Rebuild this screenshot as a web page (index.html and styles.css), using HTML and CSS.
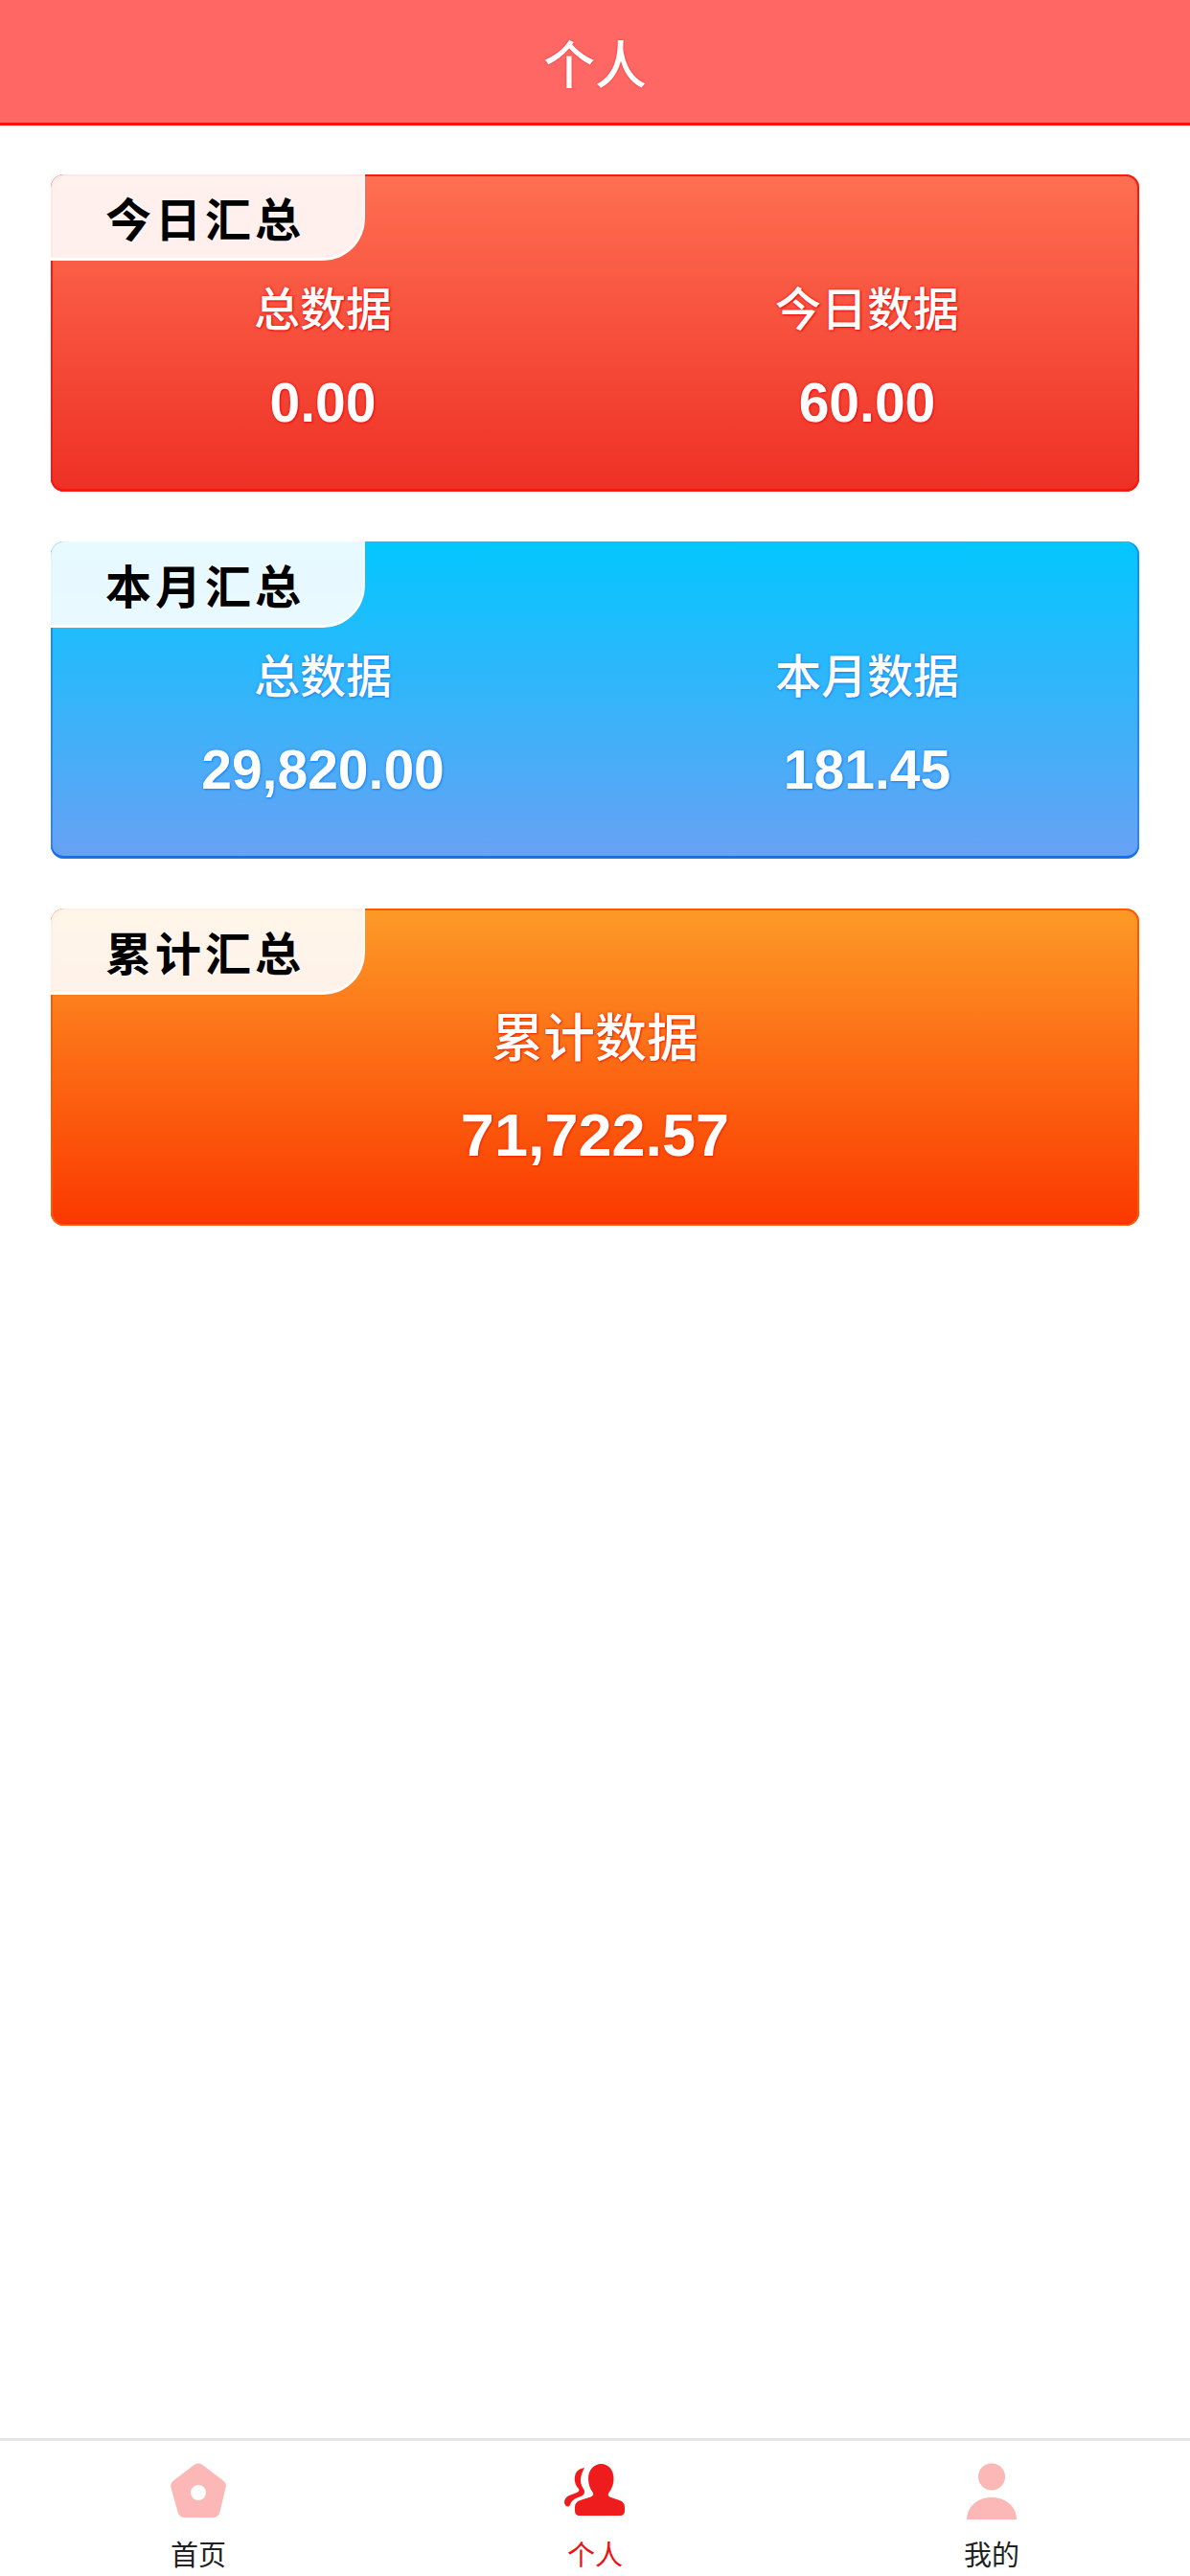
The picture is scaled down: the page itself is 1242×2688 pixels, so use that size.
FILE: index.html
```html
<!DOCTYPE html>
<html lang="zh-CN">
<head>
    <meta charset="UTF-8">
    <meta name="viewport" content="width=device-width, initial-scale=1.0">
    <title>个人</title>
    <link rel="stylesheet" href="styles.css">
</head>
<body>
    <div class="page">
        <header class="top-bar">个人</header>

        <main class="summary-list">
            <!-- 今日汇总 -->
            <section class="summary-card card-red">
                <div class="card-tab">今日汇总</div>
                <div class="stat-row">
                    <div class="stat">
                        <div class="stat-label">总数据</div>
                        <div class="stat-value">0.00</div>
                    </div>
                    <div class="stat">
                        <div class="stat-label">今日数据</div>
                        <div class="stat-value">60.00</div>
                    </div>
                </div>
            </section>

            <!-- 本月汇总 -->
            <section class="summary-card card-blue">
                <div class="card-tab">本月汇总</div>
                <div class="stat-row">
                    <div class="stat">
                        <div class="stat-label">总数据</div>
                        <div class="stat-value">29,820.00</div>
                    </div>
                    <div class="stat">
                        <div class="stat-label">本月数据</div>
                        <div class="stat-value">181.45</div>
                    </div>
                </div>
            </section>

            <!-- 累计汇总 -->
            <section class="summary-card card-orange">
                <div class="card-tab">累计汇总</div>
                <div class="stat-row stat-row-single">
                    <div class="stat stat-large">
                        <div class="stat-label">累计数据</div>
                        <div class="stat-value">71,722.57</div>
                    </div>
                </div>
            </section>
        </main>

        <!-- 底部导航 -->
        <nav class="tab-bar">
            <div class="tab-item">
                <svg class="tab-icon" viewBox="0 0 64 60" width="64" height="60">
                    <path fill="#fbb8b6" fill-rule="evenodd" d="M27 2.500a8 8 0 0 1 10 0l21 16a7 7 0 0 1 2.500 7.500l-6 25a8 8 0 0 1-8 6H18.500a8 8 0 0 1-8-6L3.500 26A7 7 0 0 1 6 18.500zM32 23a8 8 0 1 0 0 16 8 8 0 0 0 0-16z"/>
                </svg>
                <span class="tab-label">首页</span>
            </div>
            <div class="tab-item tab-active">
                <svg class="tab-icon" viewBox="0 0 64 60" width="64" height="60">
                    <path fill="#ee1c1c" d="M38.500 1C46 1 51.500 7.500 51.500 16c0 6-2 11.500-5 15-1.500 2-.5 4 2 5l9 3c3.500 1.200 5.500 3.500 5.500 7v4c0 3-2 5-5 5H16c-3 0-5-2-5-5v-4c0-3.500 2-5.800 5.500-7l11-3.500c2.500-1 3.500-3 2-5-3-3.500-4.500-9-4.500-14.500C25 7.500 31 1 38.500 1z"/>
                    <path fill="#ee1c1c" d="M21 5c-5 1-9 3-10 9-1 5 1 10 4 13 1 2 0 3-2 4l-8 3c-3 1.500-5 4-5 7 0 3 2.500 5 4.500 4.500 1-.5 1.500-2 2.500-4 1-2 3-3.500 5-4.500l6-2.500c3-1.500 3.500-4 2.500-6.500-2-3-3.500-6-3.500-10 0-4 1.500-8 3.500-12z"/>
                </svg>
                <span class="tab-label">个人</span>
            </div>
            <div class="tab-item">
                <svg class="tab-icon" viewBox="0 0 64 60" width="64" height="60">
                    <circle cx="32" cy="14.500" r="14" fill="#fbb8b6"/>
                    <path fill="#fbb8b6" d="M6 59c0-13 11-23 26-23s26 10 26 23z"/>
                </svg>
                <span class="tab-label">我的</span>
            </div>
        </nav>
    </div>
</body>
</html>
```

FILE: styles.css
```css
* {
    box-sizing: border-box;
    margin: 0;
    padding: 0;
}

body {
    font-family: "Liberation Sans", "Noto Sans CJK SC", sans-serif;
    background: white;
    color: #111;
}

.page {
    display: flex;
    flex-direction: column;
    height: 2688px;
}

/* Шапка */
.top-bar {
    height: 131px;
    flex-shrink: 0;
    display: flex;
    align-items: center;
    justify-content: center;
    background: #ff6765;
    border-bottom: 3px solid #f81010;
    color: white;
    font-size: 54px;
    font-weight: 500;
    text-shadow: 0 0 2px #f01818;
}

/* Карточки */
.summary-list {
    flex: 1;
    display: flex;
    flex-direction: column;
    gap: 52px;
    padding: 51px 53px 0;
}

.summary-card {
    height: 331px;
    border-radius: 14px;
    overflow: hidden;
}

.card-red {
    background: linear-gradient(#ff6f52, #ee3025);
    box-shadow: inset 0 0 0 2px #f61a10, inset 0 -3px 0 #f61a10;
    --glow: #f01010;
}

.card-blue {
    background: linear-gradient(#03c7ff, #68a1f4);
    box-shadow: inset 2px 0 0 rgba(20, 110, 245, 0.6), inset -2px 0 0 rgba(20, 110, 245, 0.6), inset 0 -3px 0 #1a6ef0;
    --glow: #1f86f5;
}

.card-orange {
    background: linear-gradient(#fd9a27, #fb3800);
    box-shadow: inset 0 0 0 2px #fb5a05, inset 0 -3px 0 #f62800;
    --glow: #f02a00;
}

.card-tab {
    width: 328px;
    height: 90px;
    display: flex;
    align-items: center;
    justify-content: center;
    padding-right: 4px;
    background: rgba(255, 255, 255, 0.9);
    border-right: 2px solid white;
    border-bottom: 3px solid white;
    border-bottom-right-radius: 44px;
    font-size: 48px;
    font-weight: 700;
    letter-spacing: 4px;
    color: black;
    text-shadow: 0 0 3px white;
}

.stat-row {
    display: grid;
    grid-template-columns: 1fr 1fr;
}

.stat-row-single {
    grid-template-columns: 1fr;
}

.stat {
    display: flex;
    flex-direction: column;
    align-items: center;
    color: white;
    text-shadow: 1px 1px 2px var(--glow), 0 0 3px var(--glow);
}

.stat-label {
    height: 68px;
    margin-top: 18px;
    line-height: 68px;
    font-size: 48px;
    font-weight: 500;
}

.stat-value {
    margin-top: 22px;
    line-height: 80px;
    font-size: 57px;
    font-weight: 700;
}

.stat-large .stat-label {
    margin-top: 12px;
    font-size: 54px;
    font-weight: 500;
}

.stat-large .stat-value {
    margin-top: 26px;
    font-size: 63px;
}

/* Нижняя навигация */
.tab-bar {
    height: 144px;
    flex-shrink: 0;
    display: grid;
    grid-template-columns: repeat(3, 1fr);
    border-top: 3px solid #e4e4e4;
}

.tab-item {
    display: flex;
    flex-direction: column;
    align-items: center;
    padding-top: 23px;
    gap: 20px;
}

.tab-label {
    font-size: 29px;
    line-height: 34px;
    color: #222;
}

.tab-active .tab-label {
    color: #ee1111;
}
```
